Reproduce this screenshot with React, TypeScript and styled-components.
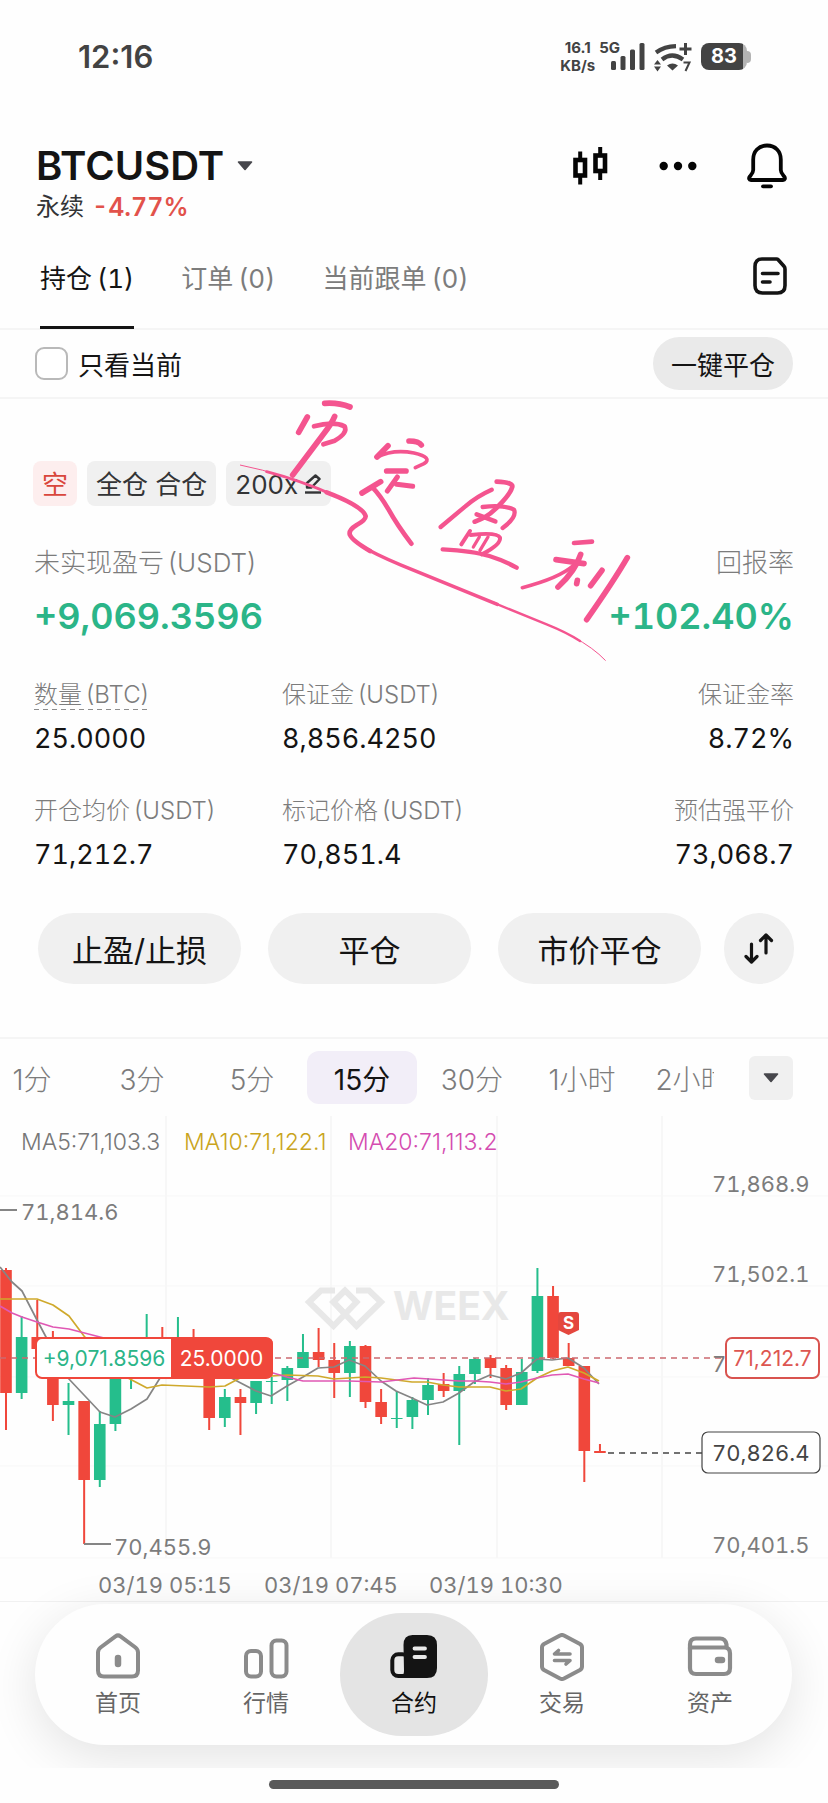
import React from "react";
import styled, { createGlobalStyle, css } from "styled-components";

const color = {
  page: "#fefefe",
  ink: "#141414",
  text: "#333436",
  muted: "#7c7c7c",
  line: "#f5f5f5",
  fill: "#f0f0f0",
  green: "#25be8c",
  greenText: "#2bb588",
  red: "#f0473b",
  redText: "#e2524b",
  pink: "#f4548f",
};

const GlobalStyle = createGlobalStyle`
  * { box-sizing: border-box; }
  body {
    margin: 0;
    background: ${color.page};
    color: ${color.ink};
    font-family: Inter, "Noto Sans CJK SC", sans-serif;
  }
  button {
    font: inherit;
    color: inherit;
    background: none;
    border: 0;
    padding: 0;
    cursor: pointer;
  }
  svg { display: block; }
  dl, dt, dd, h1, p { margin: 0; }
`;

const Screen = styled.div`
  display: flex;
  flex-direction: column;
  background: ${color.page};
`;

/* ---------- status bar ---------- */

const StatusBar = styled.div`
  display: flex;
  align-items: center;
  justify-content: space-between;
  height: 96px;
  padding: 17px 77px 0 78px;
  color: #434343;
`;

const Clock = styled.span`
  font-size: 31px;
  font-weight: 600;
  line-height: 36px;
`;

const StatusIcons = styled.div`
  display: flex;
  align-items: center;
  gap: 9px;
`;

const Network = styled.div`
  display: flex;
  align-items: flex-start;
  font-size: 15px;
  font-weight: 700;
  line-height: 18px;
`;

const Speed = styled.span`
  display: flex;
  flex-direction: column;
  align-items: center;
  margin-right: 4px;
`;

const Signal = styled.svg`
  margin: 4px 0 0 -9px;
`;

const Battery = styled.div`
  display: flex;
  align-items: center;
  justify-content: center;
  width: 46px;
  height: 27px;
  border-radius: 8px;
  background: linear-gradient(90deg, #434343 42px, #b4b4b4 42px);
  color: #fff;
  font-size: 20px;
  font-weight: 700;
  line-height: 27px;
`;

const BatteryTip = styled.span`
  width: 4px;
  height: 12px;
  margin-left: -9px;
  border-radius: 0 4px 4px 0;
  background: #b4b4b4;
`;

/* ---------- header ---------- */

const Header = styled.header`
  display: flex;
  justify-content: space-between;
  padding: 46px 41px 0 36px;
`;

const Pair = styled.button`
  display: flex;
  align-items: center;
  gap: 13px;
`;

const PairName = styled.h1`
  font-size: 40px;
  font-weight: 600;
  line-height: 48px;
`;

const PairMeta = styled.p`
  display: flex;
  gap: 8px;
  font-size: 24px;
  line-height: 34px;
  color: ${color.text};
`;

const Change = styled.strong`
  font-size: 25px;
  font-weight: 600;
  color: ${color.redText};
  font-variant-numeric: tabular-nums;
`;

const HeaderTools = styled.div`
  display: flex;
  align-items: center;
  gap: 50px;
  height: 48px;
`;

/* ---------- tabs ---------- */

const TabBar = styled.div`
  display: flex;
  align-items: center;
  justify-content: space-between;
  height: 100px;
  margin-top: 6px;
  padding: 0 41px 0 40px;
  border-bottom: 2px solid ${color.line};
`;

const TabList = styled.div`
  display: flex;
  gap: 47px;
  height: 100px;
`;

const Tab = styled.button<{ $active?: boolean }>`
  height: 100px;
  padding-top: 3px;
  font-size: 26px;
  line-height: 32px;
  white-space: nowrap;
  font-variant-numeric: tabular-nums;
  color: ${(p) => (p.$active ? color.ink : color.muted)};
  border-bottom: 3px solid ${(p) => (p.$active ? color.ink : "transparent")};
`;

const HistoryButton = styled.button`
  padding-bottom: 6px;
`;

/* ---------- filter row ---------- */

const FilterRow = styled.div`
  display: flex;
  align-items: center;
  justify-content: space-between;
  height: 69px;
  padding: 0 35px;
  border-bottom: 2px solid ${color.line};
`;

const CheckLabel = styled.label`
  display: flex;
  align-items: center;
  gap: 10px;
  font-size: 26px;
  line-height: 32px;

  span {
    padding-top: 4px;
  }
`;

const Checkbox = styled.input`
  appearance: none;
  width: 33px;
  height: 33px;
  margin: 0;
  border: 2px solid #b9b9b9;
  border-radius: 9px;
  background: #fff;
`;

const CloseAll = styled.button`
  height: 53px;
  padding: 4px 18px 0;
  border-radius: 27px;
  background: #eaeaea;
  font-size: 26px;
  line-height: 32px;
`;

/* ---------- position card ---------- */

const Card = styled.section`
  position: relative;
  padding: 62px 34px 53px;
`;

const Chips = styled.div`
  display: flex;
  gap: 10px;
  margin-left: -1px;
`;

const chip = css<{ $short?: boolean }>`
  display: flex;
  align-items: center;
  height: 45px;
  padding: 3px 9px 0;
  border-radius: 8px;
  font-size: 26px;
  line-height: 32px;
  background: ${(p) => (p.$short ? "#fdeeee" : color.fill)};
  color: ${(p) => (p.$short ? "#d9463c" : color.text)};
`;

const Chip = styled.span<{ $short?: boolean }>`
  ${chip}
`;

const ChipButton = styled.button`
  ${chip}
  gap: 6px;
`;

const Headline = styled.dl`
  display: flex;
  justify-content: space-between;
  margin-top: 41px;
`;

const HeadlineItem = styled.div<{ $end?: boolean }>`
  text-align: ${(p) => (p.$end ? "right" : "left")};

  dt {
    font-size: 26px;
    line-height: 32px;
    color: ${color.muted};
  }

  dd {
    margin-top: 15px;
    font-size: 36px;
    font-weight: 600;
    line-height: 44px;
    color: ${color.greenText};
    font-variant-numeric: tabular-nums;
  }
`;

const Metrics = styled.dl`
  display: grid;
  grid-template-columns: 248px 1fr auto;
  row-gap: 40px;
  margin-top: 42px;
`;

const Metric = styled.div<{ $end?: boolean; $hint?: boolean }>`
  text-align: ${(p) => (p.$end ? "right" : "left")};

  dt {
    font-size: 24px;
    line-height: 30px;
    color: ${color.muted};
    white-space: nowrap;
  }

  dt > span {
    ${(p) =>
      p.$hint &&
      css`
        background: repeating-linear-gradient(90deg, #8d8d8d 0 5px, transparent 5px 9px) bottom / 100% 1px no-repeat;
      `}
  }

  dd {
    margin-top: 12px;
    font-size: 27px;
    line-height: 34px;
    font-variant-numeric: tabular-nums;
  }
`;

const LabelText = styled.span`
  display: inline-flex;
  gap: 4px;
  font-weight: 300;
`;

const TabText = styled.span`
  display: inline-flex;
  gap: 5px;
`;

const Actions = styled.div`
  display: flex;
  gap: 27px;
  margin: 41px 0 0 4px;
`;

const Action = styled.button`
  flex: 1;
  height: 71px;
  padding-top: 4px;
  border-radius: 36px;
  background: ${color.fill};
  font-size: 31px;
  line-height: 38px;
`;

const RoundAction = styled.button`
  display: flex;
  align-items: center;
  justify-content: center;
  width: 70px;
  height: 71px;
  margin-left: -4px;
  border-radius: 36px;
  background: ${color.fill};
`;

const Handwriting = styled.svg`
  position: absolute;
  top: 0;
  left: 240px;
  pointer-events: none;
`;

/* ---------- chart ---------- */

const IntervalBar = styled.div`
  display: flex;
  align-items: center;
  gap: 35px;
  height: 79px;
  padding-right: 35px;
  border-top: 2px solid ${color.line};
`;

const IntervalScroller = styled.div`
  flex: 1;
  min-width: 0;
  overflow: hidden;
`;

const IntervalList = styled.div`
  display: flex;
  margin-left: -23px;
`;

const Interval = styled.button<{ $active?: boolean }>`
  flex: 0 0 110px;
  height: 53px;
  padding-top: 4px;
  border-radius: 12px;
  font-size: 28px;
  font-weight: ${(p) => (p.$active ? 400 : 300)};
  line-height: 34px;
  color: ${(p) => (p.$active ? color.ink : color.muted)};
  background: ${(p) => (p.$active ? "#f2eef8" : "none")};
`;

const MoreIntervals = styled.button`
  display: flex;
  align-items: center;
  justify-content: center;
  width: 44px;
  height: 44px;
  border-radius: 6px;
  background: ${color.fill};
`;

const Chart = styled.svg`
  width: 100%;
  height: auto;
  font-family: Inter, sans-serif;

  .axis {
    font-size: 22px;
    fill: ${color.muted};
    font-variant-numeric: tabular-nums;
  }

  .axis .current {
    fill: #444;
  }

  .legend {
    font-size: 23px;
    font-weight: 300;
  }

  .tag {
    font-size: 21px;
  }
`;

/* ---------- bottom navigation ---------- */

const NavArea = styled.div`
  padding: 2px 36px 23px 35px;
  border-top: 1px solid #f1f1f1;
  clip-path: inset(-80px 0 0 0);
`;

const Nav = styled.nav`
  display: flex;
  align-items: center;
  height: 141px;
  padding: 0 8px 0 9px;
  border-radius: 71px;
  background: #fefefe;
  box-shadow: 0 12px 50px rgba(0, 0, 0, 0.11);
`;

const NavItem = styled.a<{ $active?: boolean }>`
  flex: 1;
  display: flex;
  flex-direction: column;
  align-items: center;
  gap: 7px;
  height: 123px;
  padding-top: 20px;
  border-radius: 62px;
  font-size: 23px;
  line-height: 30px;
  text-decoration: none;
  color: ${(p) => (p.$active ? "#111" : "#666")};
  background: ${(p) => (p.$active ? "#e4e4e4" : "none")};
`;

const HomeArea = styled.div`
  display: flex;
  justify-content: center;
  height: 35px;
  padding-top: 12px;
`;

const HomeIndicator = styled.span`
  width: 35%;
  height: 9px;
  border-radius: 5px;
  background: #5a5a5a;
`;

/* ---------- icons ---------- */

const Caret = () => (
  <svg width="16" height="10" viewBox="0 0 16 10" aria-hidden="true">
    <path d="M1.5 1h13L8 8.5z" fill="#47474c" stroke="#47474c" strokeWidth="1.6" strokeLinejoin="round" />
  </svg>
);

const SignalIcon = () => (
  <Signal width="34" height="27" viewBox="0 0 34 27" fill="#434343" aria-hidden="true">
    <rect x="0" y="18" width="5" height="9" rx="1.5" />
    <rect x="9.5" y="13" width="5" height="14" rx="1.5" />
    <rect x="19" y="6.5" width="5" height="20.5" rx="1.5" />
    <rect x="28.5" y="0" width="5" height="27" rx="1.5" />
  </Signal>
);

const WifiIcon = () => (
  <svg width="38" height="30" viewBox="0 0 38 30" fill="none" stroke="#434343" aria-hidden="true">
    <path d="M2 10.5Q10.5 4.5 22 4.2" strokeWidth="4.2" />
    <path d="M8 17.5Q18 9.5 29 17.5" strokeWidth="4.2" />
    <path d="M13 23.5Q18.5 19.5 24 23.5L18.5 28.5z" fill="#434343" stroke="none" />
    <path d="M31.5 1v12M25.5 7h12" strokeWidth="3" />
    <path d="M0 22.5L3.5 18L7 22.5zM0 24.5L3.5 29.5L7 24.5z" fill="#434343" stroke="none" />
    <path d="M29.5 20.5h6L31.5 29" strokeWidth="2" />
  </svg>
);

const CandlesIcon = () => (
  <svg width="36" height="38" viewBox="0 0 36 38" fill="none" stroke="#050505" strokeWidth="4.6" aria-hidden="true">
    <rect x="2.5" y="13" width="9.5" height="15.5" />
    <path d="M7.2 4.5v8M7.2 29v8.5" strokeWidth="4" />
    <rect x="22.5" y="8.5" width="9.5" height="15.5" />
    <path d="M27.2 0v8M27.2 24.5V33" strokeWidth="4" />
  </svg>
);

const DotsIcon = () => (
  <svg width="38" height="10" viewBox="0 0 38 10" fill="#050505" aria-hidden="true">
    <circle cx="4.7" cy="5" r="4.2" />
    <circle cx="19" cy="5" r="4.2" />
    <circle cx="33.3" cy="5" r="4.2" />
  </svg>
);

const BellIcon = () => (
  <svg width="40" height="46" viewBox="0 0 40 46" fill="none" stroke="#050505" strokeWidth="3.8" strokeLinecap="round" strokeLinejoin="round" aria-hidden="true">
    <path d="M20 2.5C11.5 2.5 6.2 8.5 6.2 16.5V27C6.2 30 4.5 31.5 2.8 33.5C1.5 35.2 2 37 4 37H36C38 37 38.5 35.2 37.2 33.5C35.5 31.5 33.8 30 33.8 27V16.5C33.8 8.5 28.5 2.5 20 2.5z" />
    <path d="M16 43.3h8" />
  </svg>
);

const DocIcon = () => (
  <svg width="34" height="38" viewBox="0 0 34 38" fill="none" stroke="#141414" strokeWidth="3.6" strokeLinecap="round" strokeLinejoin="round" aria-hidden="true">
    <path d="M9 2H23.5Q24.5 2 25.2 2.8L31 9.2Q32 10.3 32 12V28.5Q32 36 24.5 36H9.5Q2 36 2 28.5V9.5Q2 2 9 2z" />
    <path d="M9.5 16.5H25M9.5 25H17" />
  </svg>
);

const PencilIcon = () => (
  <svg width="18" height="22" viewBox="0 0 18 22" fill="none" stroke="#333436" strokeWidth="2.4" strokeLinejoin="round" aria-hidden="true">
    <path d="M3 13.5V9L11.5 1.5L15.5 5L7.5 13.5z" />
    <path d="M1 18.5H17" />
  </svg>
);

const SwapIcon = () => (
  <svg width="30" height="31" viewBox="0 0 30 31" fill="none" stroke="#141414" strokeWidth="3.2" strokeLinecap="round" strokeLinejoin="round" aria-hidden="true">
    <path d="M7.5 11V28.5M2 23.5L7.5 29L13 23.5" />
    <path d="M22 20V2.5M16.5 7.5L22 2L27.5 7.5" />
  </svg>
);

const HomeIcon = () => (
  <svg width="46" height="48" viewBox="0 0 46 48" fill="none" stroke="#8b8b8b" strokeWidth="4" strokeLinejoin="round" aria-hidden="true">
    <path d="M20.5 3.3Q23 1.5 25.5 3.3L40.5 14.5Q43 16.5 43 19.5V37.5Q43 43.5 37 43.5H9Q3 43.5 3 37.5V19.5Q3 16.5 5.5 14.5z" />
    <path d="M23 25v6" strokeWidth="6.5" strokeLinecap="round" />
  </svg>
);

const MarketIcon = () => (
  <svg width="46" height="48" viewBox="0 0 46 48" fill="none" stroke="#8b8b8b" strokeWidth="4" aria-hidden="true">
    <rect x="3" y="18" width="15" height="25.5" rx="5" />
    <rect x="28.5" y="7.5" width="15" height="36" rx="5" />
  </svg>
);

const ContractIcon = () => (
  <svg width="48" height="48" viewBox="0 0 48 48" aria-hidden="true">
    <rect x="2.3" y="21.3" width="16" height="21.7" rx="6" fill="#e9e9e9" stroke="#141414" strokeWidth="4" />
    <path d="M13.5 12Q13.5 2 22.5 2H37Q47 2 47 12V35Q47 45 37 45H9Q14 44 14 38z" fill="#141414" />
    <path d="M24.5 15.5H35M24.5 24H35" stroke="#e9e9e9" strokeWidth="3.8" strokeLinecap="round" />
  </svg>
);

const TradeIcon = () => (
  <svg width="46" height="48" viewBox="0 0 46 48" fill="none" stroke="#8b8b8b" strokeWidth="4" strokeLinecap="round" strokeLinejoin="round" aria-hidden="true">
    <path d="M21 2.5Q23 1.5 25 2.5L41 11Q43 12.2 43 14.5V33.5Q43 35.8 41 37L25 45.5Q23 46.5 21 45.5L5 37Q3 35.8 3 33.5V14.5Q3 12.2 5 11z" />
    <path d="M31 21H15.5L19.5 17.5M15.5 27.5H31L27 31" strokeWidth="3.6" />
  </svg>
);

const WalletIcon = () => (
  <svg width="46" height="48" viewBox="0 0 46 48" fill="none" stroke="#8b8b8b" strokeWidth="4.2" strokeLinejoin="round" aria-hidden="true">
    <path d="M3 16.5V11.5Q3 5.5 9 5.5H33Q38.5 5.5 39.5 11.5V15" />
    <path d="M3 14.5H37.5Q43 14.5 43 20.5V35Q43 41 37 41H9Q3 41 3 35z" />
    <path d="M31 27h4" strokeWidth="6.5" strokeLinecap="round" />
  </svg>
);

/* ---------- chart data ---------- */

type Candle = [up: boolean, high: number, top: number, bottom: number, low: number];

const candles: Candle[] = [
  [false, 152, 154, 277, 314],
  [true, 200, 221, 277, 283],
  [false, 184, 221, 233, 236],
  [false, 215, 233, 289, 305],
  [true, 267, 285, 289, 319],
  [false, 285, 285, 364, 428],
  [true, 295, 308, 364, 371],
  [true, 240, 242, 308, 315],
  [true, 228, 236, 250, 273],
  [true, 198, 230, 248, 255],
  [false, 211, 228, 244, 250],
  [true, 201, 226, 246, 252],
  [false, 213, 228, 246, 250],
  [false, 230, 244, 302, 314],
  [true, 273, 281, 302, 311],
  [false, 273, 281, 287, 319],
  [true, 265, 265, 287, 298],
  [true, 261, 265, 266, 288],
  [true, 250, 252, 264, 285],
  [true, 218, 236, 252, 252],
  [false, 212, 236, 244, 251],
  [false, 227, 244, 257, 282],
  [true, 225, 230, 257, 281],
  [false, 229, 230, 286, 292],
  [false, 273, 286, 301, 308],
  [true, 275, 302, 303, 312],
  [true, 281, 284, 301, 313],
  [true, 262, 269, 284, 299],
  [false, 257, 268, 275, 281],
  [true, 250, 258, 275, 329],
  [true, 242, 243, 258, 268],
  [false, 239, 242, 252, 262],
  [false, 249, 252, 289, 294],
  [true, 243, 256, 289, 289],
  [true, 152, 180, 255, 257],
  [false, 170, 180, 242, 243],
  [false, 227, 242, 250, 250],
  [false, 250, 250, 335, 366],
  [false, 328, 335, 337, 337],
];

const candleX = (i: number) => 6 + i * 15.63;

const averages = [
  {
    stroke: "#858585",
    points:
      "0,151 12,166 22,175 37,204 46,221 68,262 100,296 115,301 131,293 147,283 160,262 180,248 220,256 235,264 256,275 271,280 287,270 303,261 318,252 334,251 349,244 365,250 381,265 396,275 412,282 427,289 443,286 459,277 474,266 490,259 506,263 521,257 537,243 552,244 568,242 584,252 599,268",
  },
  {
    stroke: "#cfa92c",
    points:
      "0,183 22,183 37,183 53,189 69,200 84,220 110,250 128,262 147,272 162,269 209,271 225,270 240,262 287,259 318,260 334,263 365,261 381,262 412,266 427,266 443,269 459,271 490,271 506,275 521,273 537,262 552,255 568,251 584,257 599,265",
  },
  {
    stroke: "#e058b4",
    points:
      "0,190 12,197 22,201 37,206 53,211 69,213 100,221 200,246 273,257 287,261 303,265 349,265 381,266 414,262 459,265 474,265 490,266 506,268 521,266 537,262 552,259 568,258 584,263 599,267",
  },
];

const gridColumns = [166, 331, 497, 662];
const gridRows = [80, 170, 261, 350, 442];

const priceAxis = [
  { y: 76, label: "71,868.9" },
  { y: 166, label: "71,502.1" },
  { y: 256, label: "7" },
  { y: 437, label: "70,401.5" },
];

const timeAxis = [
  { x: 98, label: "03/19 05:15" },
  { x: 264, label: "03/19 07:45" },
  { x: 429, label: "03/19 10:30" },
];

const PriceChart = () => (
  <Chart viewBox="0 0 828 485" role="img" aria-label="BTCUSDT 15分 K线">
    <g stroke="#f7f7f7" strokeWidth="2">
      {gridColumns.map((x) => (
        <path key={x} d={`M${x} 0V442`} />
      ))}
      {gridRows.map((y) => (
        <path key={y} d={`M0 ${y}H828`} strokeWidth="1" />
      ))}
    </g>

    <g fill="none" stroke="#e8e8e8" strokeWidth="6">
      <path d="M335 174.5H321L309 186L333.5 210L356.5 186L345 174.5L333.5 186L345 198" />
      <path d="M356 174.5H369L381 186L356.5 210L333.5 186L345 174.5" />
    </g>
    <text x="393" y="204" fontSize="39" fontWeight="700" fill="#e8e8e8">
      WEEX
    </text>

    <g className="legend">
      <text x="21" y="34" fill="#777">MA5:71,103.3</text>
      <text x="184" y="34" fill="#c9a41c">MA10:71,122.1</text>
      <text x="348" y="34" fill="#d44cb0">MA20:71,113.2</text>
    </g>

    {candles.map(([up, high, top, bottom, low], i) => {
      const fill = up ? color.green : color.red;
      const x = candleX(i);
      return (
        <g key={i} fill={fill}>
          <rect x={x - 1} y={high} width="2" height={low - high} />
          <rect x={x - 5.8} y={top} width="11.6" height={bottom - top} />
        </g>
      );
    })}

    {averages.map((line) => (
      <polyline key={line.stroke} points={line.points} fill="none" stroke={line.stroke} strokeWidth="1.7" strokeLinejoin="round" />
    ))}

    <path d="M0 242H725" stroke="#cc6a70" strokeWidth="1.7" strokeDasharray="6 5" />
    <path d="M608 337H702" stroke="#444" strokeWidth="1.5" strokeDasharray="6 5" />

    <rect x="702" y="316" width="118" height="41" rx="6" fill="#fff" stroke="#444" strokeWidth="1.2" />
    <g className="axis">
      {priceAxis.map((tick) => (
        <text key={tick.y} x="712" y={tick.y}>
          {tick.label}
        </text>
      ))}
      {timeAxis.map((tick) => (
        <text key={tick.x} x={tick.x} y="477">
          {tick.label}
        </text>
      ))}
      <text x="21" y="104">71,814.6</text>
      <text x="114" y="439">70,455.9</text>
      <text x="712" y="345" className="current">70,826.4</text>
    </g>
    <path d="M0 94H17M84 428H111" stroke="#858585" strokeWidth="2" />

    <path d="M561 196H576Q579 196 579 199V214L568.5 219L558 214V199Q558 196 561 196z" fill="#e4473e" />
    <text x="568.5" y="212.5" fontSize="17" fontWeight="700" fill="#fff" textAnchor="middle">
      S
    </text>

    <rect x="36" y="222" width="236" height="40" rx="6" fill="#fff" stroke={color.red} strokeWidth="2" />
    <path d="M171 222H267Q273 222 273 228V256Q273 262 267 262H171z" fill={color.red} />
    <g className="tag">
      <text x="104" y="249.5" fill={color.greenText} textAnchor="middle">+9,071.8596</text>
      <text x="221.5" y="249.5" fill="#fff" textAnchor="middle">25.0000</text>
    </g>

    <rect x="726" y="222" width="93" height="40" rx="6" fill="#fff" stroke="#d9534f" strokeWidth="2" />
    <text className="tag" x="772.5" y="249.5" fill="#dd5651" textAnchor="middle">
      71,212.7
    </text>
  </Chart>
);

const Note = () => (
  <Handwriting width="400" height="270" viewBox="720 24 1200 810" role="img" aria-label="币定盈利">
    <g fill="none" stroke={color.pink} strokeWidth="17" strokeLinecap="round" strokeLinejoin="round">
      <g>
        <path d="M974 37Q1015 34 1050 48" />
        <path d="M922 78L896 124" />
        <path d="M942 106Q1000 90 1034 106Q1044 126 1004 149L970 160" strokeWidth="14" />
        <path d="M1004 76Q996 96 970 130L878 252" />
      </g>
      <g>
        <path d="M1227 150Q1256 150 1264 162" />
        <path d="M1164 164L1131 198" />
        <path d="M1131 198Q1180 174 1242 186Q1300 200 1272 218L1246 230" strokeWidth="11" />
        <path d="M1160 240H1218" />
        <path d="M1192 258L1162 300M1190 280L1238 286" strokeWidth="15" />
        <path d="M1086 306L1142 272" />
        <path d="M1118 290Q1140 312 1166 356Q1190 400 1234 458" strokeWidth="14" />
      </g>
      <g>
        <path d="M1475 296Q1430 316 1396 346L1322 408" strokeWidth="13" />
        <path d="M1490 272Q1544 274 1536 290Q1530 312 1484 356Q1460 380 1424 392" strokeWidth="14" />
        <path d="M1448 348Q1510 340 1542 356Q1552 378 1508 411" strokeWidth="13" />
        <path d="M1430 370L1486 391" strokeWidth="14" />
        <path d="M1410 420L1384 460M1412 432Q1492 422 1500 440Q1504 460 1446 490" strokeWidth="12" />
        <path d="M1438 438L1420 468M1464 438L1440 478" strokeWidth="10" />
        <path d="M1328 475Q1420 480 1468 495Q1510 508 1550 530" strokeWidth="13" />
      </g>
      <g>
        <path d="M1722 456L1776 452" strokeWidth="14" />
        <path d="M1668 506L1752 518" />
        <path d="M1742 490Q1726 540 1674 588" />
        <path d="M1720 524Q1676 562 1567 590" strokeWidth="11" />
        <path d="M1732 568L1730 578" />
        <path d="M1806 538L1772 584" />
        <path d="M1882 500Q1840 572 1760 686" />
      </g>
      <g>
        <path d="M720 222Q790 236 850 256" strokeWidth="3" />
        <path d="M800 242Q900 268 1000 312" strokeWidth="9" />
        <path d="M980 304Q1090 346 1097 376Q1096 388 1070 402Q1044 418 1050 432Q1056 448 1110 480" strokeWidth="14" />
        <path d="M1100 474Q1160 506 1242 538L1492 640" strokeWidth="11" />
        <path d="M1480 635L1640 700Q1700 724 1740 750" strokeWidth="7" />
        <path d="M1720 738Q1780 770 1816 808" strokeWidth="3" />
      </g>
    </g>
  </Handwriting>
);

const Label = ({ name, unit }: { name: string; unit?: string }) => (
  <LabelText>
    {name}
    {unit && <span>{unit}</span>}
  </LabelText>
);

const metrics = [
  { name: "数量", unit: "(BTC)", value: "25.0000", hint: true },
  { name: "保证金", unit: "(USDT)", value: "8,856.4250" },
  { name: "保证金率", value: "8.72%", end: true },
  { name: "开仓均价", unit: "(USDT)", value: "71,212.7" },
  { name: "标记价格", unit: "(USDT)", value: "70,851.4" },
  { name: "预估强平价", value: "73,068.7", end: true },
];

const tabs = [
  { name: "持仓", count: 1 },
  { name: "订单", count: 0 },
  { name: "当前跟单", count: 0 },
];

const intervals = ["1分", "3分", "5分", "15分", "30分", "1小时", "2小时"];

const navItems = [
  { label: "首页", icon: <HomeIcon /> },
  { label: "行情", icon: <MarketIcon /> },
  { label: "合约", icon: <ContractIcon />, active: true },
  { label: "交易", icon: <TradeIcon /> },
  { label: "资产", icon: <WalletIcon /> },
];

export default function App() {
  return (
    <Screen>
      <GlobalStyle />

      <StatusBar>
        <Clock>12:16</Clock>
        <StatusIcons>
          <Network>
            <Speed>
              <span>16.1</span>
              <span>KB/s</span>
            </Speed>
            <span>5G</span>
            <SignalIcon />
          </Network>
          <WifiIcon />
          <Battery>83</Battery>
          <BatteryTip />
        </StatusIcons>
      </StatusBar>

      <Header>
        <div>
          <Pair>
            <PairName>BTCUSDT</PairName>
            <Caret />
          </Pair>
          <PairMeta>
            永续 <Change>-4.77%</Change>
          </PairMeta>
        </div>
        <HeaderTools>
          <button aria-label="K线">
            <CandlesIcon />
          </button>
          <button aria-label="更多">
            <DotsIcon />
          </button>
          <button aria-label="提醒">
            <BellIcon />
          </button>
        </HeaderTools>
      </Header>

      <TabBar>
        <TabList role="tablist">
          {tabs.map((tab, i) => (
            <Tab key={tab.name} role="tab" aria-selected={i === 0} $active={i === 0}>
              <TabText>
                {tab.name}
                <span>({tab.count})</span>
              </TabText>
            </Tab>
          ))}
        </TabList>
        <HistoryButton aria-label="历史记录">
          <DocIcon />
        </HistoryButton>
      </TabBar>

      <FilterRow>
        <CheckLabel>
          <Checkbox type="checkbox" />
          <span>只看当前</span>
        </CheckLabel>
        <CloseAll>一键平仓</CloseAll>
      </FilterRow>

      <Card>
        <Chips>
          <Chip $short>空</Chip>
          <Chip>全仓 合仓</Chip>
          <ChipButton>
            200x
            <PencilIcon />
          </ChipButton>
        </Chips>

        <Headline>
          <HeadlineItem>
            <dt>
              <Label name="未实现盈亏" unit="(USDT)" />
            </dt>
            <dd>+9,069.3596</dd>
          </HeadlineItem>
          <HeadlineItem $end>
            <dt>
              <Label name="回报率" />
            </dt>
            <dd>+102.40%</dd>
          </HeadlineItem>
        </Headline>

        <Metrics>
          {metrics.map((m) => (
            <Metric key={m.name} $end={m.end} $hint={m.hint}>
              <dt>
                <Label name={m.name} unit={m.unit} />
              </dt>
              <dd>{m.value}</dd>
            </Metric>
          ))}
        </Metrics>

        <Actions>
          <Action>止盈/止损</Action>
          <Action>平仓</Action>
          <Action>市价平仓</Action>
          <RoundAction aria-label="反手">
            <SwapIcon />
          </RoundAction>
        </Actions>

        <Note />
      </Card>

      <IntervalBar>
        <IntervalScroller>
          <IntervalList>
            {intervals.map((name) => (
              <Interval key={name} $active={name === "15分"}>
                {name}
              </Interval>
            ))}
          </IntervalList>
        </IntervalScroller>
        <MoreIntervals aria-label="更多周期">
          <Caret />
        </MoreIntervals>
      </IntervalBar>

      <PriceChart />

      <NavArea>
        <Nav>
          {navItems.map((item) => (
            <NavItem key={item.label} href="#" $active={item.active}>
              {item.icon}
              {item.label}
            </NavItem>
          ))}
        </Nav>
      </NavArea>

      <HomeArea>
        <HomeIndicator />
      </HomeArea>
    </Screen>
  );
}
